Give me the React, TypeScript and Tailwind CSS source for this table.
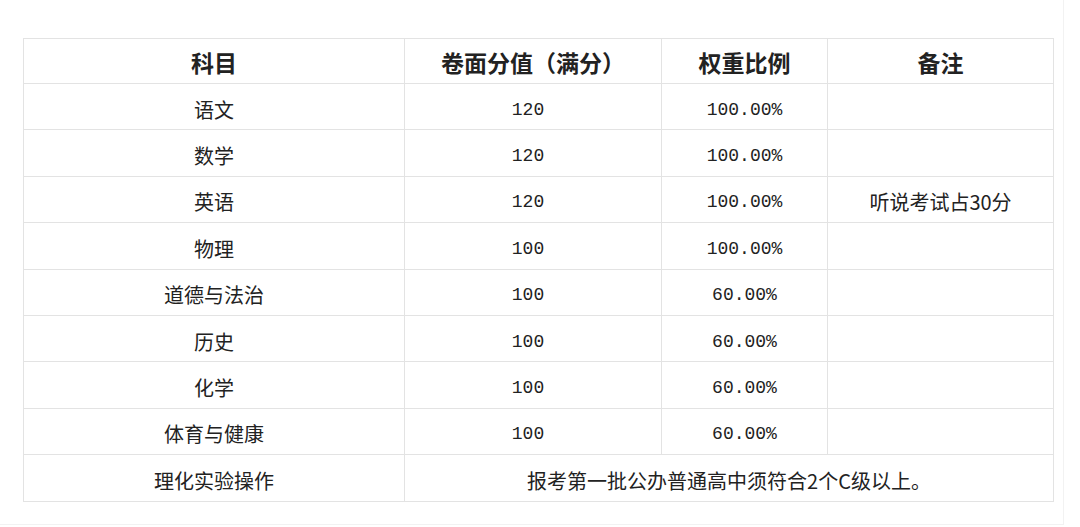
const rows: [string, string, string, string][] = [
  ["语文", "120", "100.00%", ""],
  ["数学", "120", "100.00%", ""],
  ["英语", "120", "100.00%", "听说考试占30分"],
  ["物理", "100", "100.00%", ""],
  ["道德与法治", "100", "60.00%", ""],
  ["历史", "100", "60.00%", ""],
  ["化学", "100", "60.00%", ""],
  ["体育与健康", "100", "60.00%", ""],
];

const cjk = "font-['Noto_Sans_CJK_SC','Noto_Sans',sans-serif]";
const mono = "font-['Liberation_Mono','Noto_Sans_CJK_SC',monospace]";
const cell = "border border-[#e3e3e3] text-center align-middle px-0 pb-0";

export default function App() {
  return (
    <div className="w-[1080px] h-[527px] bg-white">
      <div className="w-[1064px] h-[525px] border-r border-b border-[#f2f2f2] pt-[38px] pl-[23px]">
        <table className={`table-fixed border-collapse w-[1030px] text-[#222] ${cjk}`}>
          <colgroup>
            <col className="w-[381px]" />
            <col className="w-[257px]" />
            <col className="w-[166px]" />
            <col className="w-[226px]" />
          </colgroup>
          <thead>
            <tr className="h-[45px]">
              {["科目", "卷面分值（满分）", "权重比例", "备注"].map((h) => (
                <th key={h} className={`${cell} pt-[3px] text-[23px] font-bold leading-none`}>
                  {h}
                </th>
              ))}
            </tr>
          </thead>
          <tbody>
            {rows.map(([a, b, c, d]) => (
              <tr key={a} className="h-[46.4px]">
                <td className={`${cell} pt-[6px] text-[20px] leading-none`}>{a}</td>
                <td className={`${cell} pt-[6px] pr-[10px] ${mono} text-[18px] leading-none`}>{b}</td>
                <td className={`${cell} pt-[6px] ${mono} text-[18px] leading-none`}>{c}</td>
                <td className={`${cell} pt-[6px] text-[20px] leading-none`}>{d}</td>
              </tr>
            ))}
            <tr className="h-[46.4px]">
              <td className={`${cell} pt-[6px] text-[20px] leading-none`}>理化实验操作</td>
              <td colSpan={3} className={`${cell} pt-[6px] text-[20px] leading-none`}>
                报考第一批公办普通高中须符合2个C级以上。
              </td>
            </tr>
          </tbody>
        </table>
      </div>
    </div>
  );
}
